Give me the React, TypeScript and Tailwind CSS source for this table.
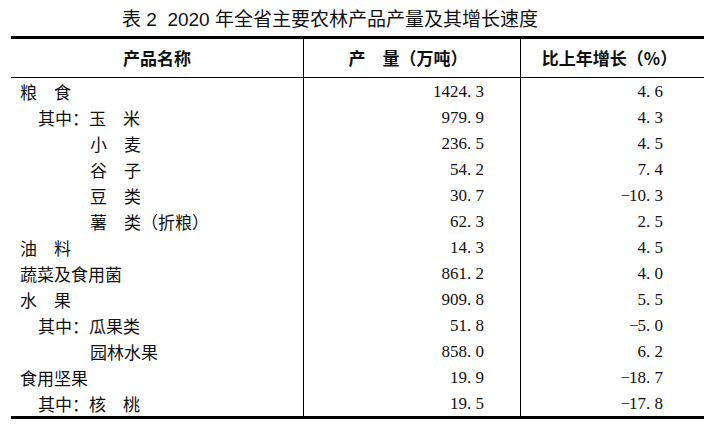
import React from "react";

type Row = { indent: "none" | "sub" | "deep"; label: string; v1: string; v2: string };

const rows: Row[] = [
  { indent: "none", label: "粮　食", v1: "1424.3", v2: "4.6" },
  { indent: "sub", label: "其中：玉　米", v1: "979.9", v2: "4.3" },
  { indent: "deep", label: "小　麦", v1: "236.5", v2: "4.5" },
  { indent: "deep", label: "谷　子", v1: "54.2", v2: "7.4" },
  { indent: "deep", label: "豆　类", v1: "30.7", v2: "-10.3" },
  { indent: "deep", label: "薯　类（折粮）", v1: "62.3", v2: "2.5" },
  { indent: "none", label: "油　料", v1: "14.3", v2: "4.5" },
  { indent: "none", label: "蔬菜及食用菌", v1: "861.2", v2: "4.0" },
  { indent: "none", label: "水　果", v1: "909.8", v2: "5.5" },
  { indent: "sub", label: "其中：瓜果类", v1: "51.8", v2: "-5.0" },
  { indent: "deep", label: "园林水果", v1: "858.0", v2: "6.2" },
  { indent: "none", label: "食用坚果", v1: "19.9", v2: "-18.7" },
  { indent: "sub", label: "其中：核　桃", v1: "19.5", v2: "-17.8" },
];

const cjk = { fontFamily: '"Noto Sans CJK SC", sans-serif' };
const title = { fontFamily: '"Liberation Sans", "Noto Sans CJK SC", sans-serif' };
const serif = { fontFamily: '"Liberation Serif", "DejaVu Serif", serif' };

function Num({ value }: { value: string }) {
  return (
    <span className="inline-flex text-[17px] leading-none text-[#111]" style={serif}>
      {value.split("").map((ch, i) =>
        ch === "-" ? (
          <span key={i} className="inline-block w-[8.5px] text-center">
            −
          </span>
        ) : (
          <span key={i} className="inline-block w-[8.5px] text-left">
            {ch}
          </span>
        )
      )}
    </span>
  );
}

export default function App() {
  return (
    <div className="w-[724px] h-[429px] bg-white overflow-hidden" style={cjk}>
      <div
        className="h-[36px] flex items-center pl-[122px] pt-[3px] text-[19px] leading-none text-[#111] whitespace-pre"
        style={title}
      >
        {"表 2  2020 年全省主要农林产品产量及其增长速度"}
      </div>
      <div className="ml-[11px] w-[693px] border-t-[3px] border-b-[3px] border-black">
        <div className="grid grid-cols-[292px_217px_184px] h-[39px] border-b border-black text-[17px] font-bold text-[#111]">
          <div className="flex items-center justify-center">产品名称</div>
          <div className="flex items-center justify-center border-l border-black pr-[8px]">产　量（万吨）</div>
          <div className="flex items-center justify-center border-l border-black pr-[6px]">比上年增长（%）</div>
        </div>
        {rows.map((r, i) => (
          <div key={i} className="grid grid-cols-[292px_217px_184px] h-[26px]">
            <div
              className={
                "flex items-center text-[17px] leading-none text-[#111] whitespace-nowrap " +
                (r.indent === "none" ? "pl-[9px]" : r.indent === "sub" ? "pl-[27px]" : "pl-[79px]")
              }
            >
              {r.label}
            </div>
            <div className="flex items-center justify-end border-l border-black pr-[36px]">
              <Num value={r.v1} />
            </div>
            <div className="flex items-center justify-end border-l border-black pr-[41px]">
              <Num value={r.v2} />
            </div>
          </div>
        ))}
      </div>
    </div>
  );
}
